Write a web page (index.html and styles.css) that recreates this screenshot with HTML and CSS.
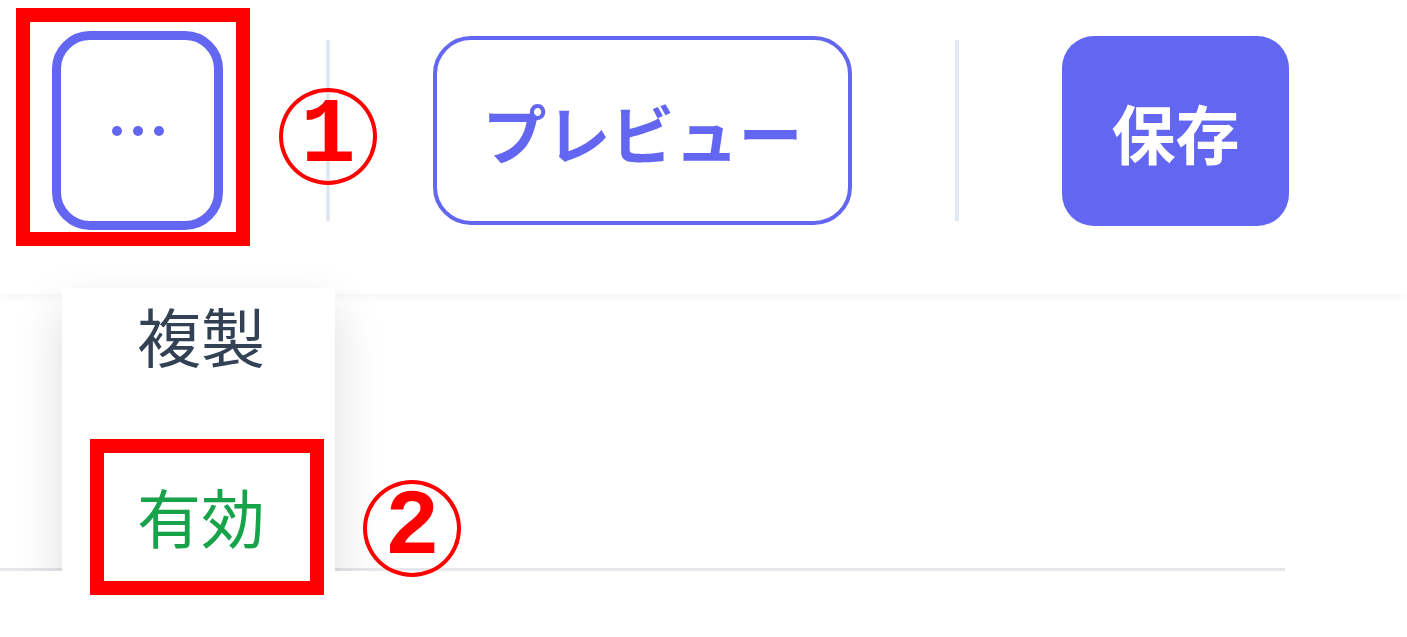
FILE: index.html
```html
<!DOCTYPE html>
<html lang="ja">
<head>
  <meta charset="UTF-8">
  <meta name="viewport" content="width=device-width, initial-scale=1.0">
  <title>メニュー操作</title>
  <link rel="stylesheet" href="styles.css">
</head>
<body>

  <header class="toolbar">
    <div class="toolbar-row">
      <button class="more-btn" aria-label="その他">
        <svg width="52" height="12" viewBox="0 0 52 12">
          <circle cx="5" cy="6" r="5" fill="#6366f1"/>
          <circle cx="26" cy="6" r="5" fill="#6366f1"/>
          <circle cx="47" cy="6" r="5" fill="#6366f1"/>
        </svg>
      </button>
      <span class="divider"></span>
      <button class="preview-btn">プレビュー</button>
      <span class="divider"></span>
      <button class="save-btn">保存</button>
    </div>
  </header>

  <main class="content">
    <div class="row"></div>

    <!-- dropdown opened from the "..." button -->
    <ul class="dropdown">
      <li class="dropdown-item">複製</li>
      <li class="dropdown-item enable">有効</li>
    </ul>
  </main>

  <!-- annotations -->
  <div class="mark mark-1"></div>
  <div class="mark mark-2"></div>
  <span class="num num-1">1</span>
  <span class="num num-2">2</span>

</body>
</html>
```

FILE: styles.css
```css
body {
  font-family: "Noto Sans CJK JP", "Noto Sans", sans-serif;
  margin: 0;
  padding: 0;
  background: #fff;
  overflow: hidden;
}

.toolbar {
  position: relative;
  z-index: 1;
  height: 294px;
  box-sizing: border-box;
  padding: 31px 0 0 52px;
  background: #fff;
  box-shadow: 0 2px 8px rgba(0, 0, 0, 0.05);
}

.toolbar-row {
  display: flex;
  align-items: center;
  gap: 103px;
  height: 199px;
}

button {
  font-family: inherit;
  cursor: pointer;
  padding: 0;
}

.more-btn {
  width: 171px;
  height: 199px;
  border: 9px solid #6366f1;
  border-radius: 38px;
  background: #fff;
  display: flex;
  align-items: center;
  justify-content: center;
}

.divider {
  width: 4px;
  height: 181px;
  background: #e2e8f0;
}

.preview-btn {
  width: 419px;
  height: 189px;
  border: 4px solid #6366f1;
  border-radius: 38px;
  background: #fff;
  color: #6366f1;
  font-size: 64px;
  font-weight: 700;
}

.save-btn {
  width: 227px;
  height: 190px;
  border: none;
  border-radius: 32px;
  background: #6366f1;
  color: #fff;
  font-size: 64px;
  font-weight: 700;
}

.content {
  position: relative;
}

.row {
  width: 1285px;
  height: 274px;
  border-bottom: 3px solid #e5e7eb;
}

.dropdown {
  position: absolute;
  z-index: 2;
  top: -6px;
  left: 62px;
  width: 273px;
  box-sizing: border-box;
  margin: 0;
  padding: 0 0 42px 75px;
  list-style-type: none;
  display: flex;
  flex-direction: column;
  gap: 89px;
  background: #fff;
  border-radius: 0 0 28px 28px;
  box-shadow: 0 20px 50px rgba(0, 0, 0, 0.14);
}

.dropdown-item {
  font-size: 64px;
  line-height: 92px;
  color: #334155;
}

.dropdown-item.enable {
  color: #16a34a;
}

.mark {
  position: absolute;
  z-index: 3;
  box-sizing: border-box;
  border: 14px solid #ff0000;
}

.mark-1 {
  left: 16px;
  top: 8px;
  width: 234px;
  height: 238px;
}

.mark-2 {
  left: 90px;
  top: 439px;
  width: 234px;
  height: 156px;
}

.num {
  position: absolute;
  z-index: 3;
  box-sizing: border-box;
  width: 98px;
  height: 97px;
  border: 4px solid #ff0000;
  border-radius: 50%;
  display: flex;
  align-items: center;
  justify-content: center;
  font-family: "Liberation Mono", monospace;
  font-weight: 700;
  font-size: 92px;
  line-height: 1;
  color: #ff0000;
}

.num-1 {
  left: 279px;
  top: 88px;
}

.num-2 {
  left: 363px;
  top: 480px;
}
```
